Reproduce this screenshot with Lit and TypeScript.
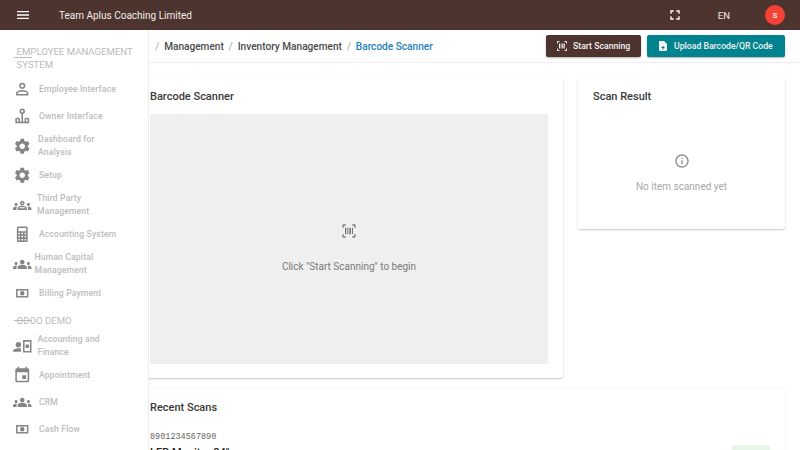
import { LitElement, html, css, svg } from "lit";
import { customElement } from "lit/decorators.js";

const settings = svg`<path d="M19.14 12.94c.04-.3.06-.61.06-.94 0-.32-.02-.64-.07-.94l2.03-1.58c.18-.14.23-.41.12-.61l-1.92-3.32c-.12-.22-.37-.29-.59-.22l-2.39.96c-.5-.38-1.03-.7-1.62-.94l-.36-2.54c-.04-.24-.24-.41-.48-.41h-3.84c-.24 0-.43.17-.47.41l-.36 2.54c-.59.24-1.13.57-1.62.94l-2.39-.96c-.22-.08-.47 0-.59.22L2.74 8.87c-.12.21-.08.47.12.61l2.03 1.58c-.05.3-.09.63-.09.94s.02.64.07.94l-2.03 1.58c-.18.14-.23.41-.12.61l1.92 3.32c.12.22.37.29.59.22l2.39-.96c.5.38 1.03.7 1.62.94l.36 2.54c.05.24.24.41.48.41h3.84c.24 0 .44-.17.47-.41l.36-2.54c.59-.24 1.13-.56 1.62-.94l2.39.96c.22.08.47 0 .59-.22l1.92-3.32c.12-.22.07-.47-.12-.61l-2.01-1.58zM12 15.6c-1.98 0-3.6-1.62-3.6-3.6s1.62-3.6 3.6-3.6 3.6 1.62 3.6 3.6-1.62 3.6-3.6 3.6z"/>`;
const person = svg`<path fill-rule="evenodd" d="M12 3.500a4 4 0 1 1 0 8 4 4 0 0 1 0-8zm0 2a2 2 0 1 0 0 4 2 2 0 0 0 0-4zM12 13c3 0 8 1.300 8 3.800V20H4v-3.200C4 14.300 9 13 12 13zm0 2c-2.800 0-6 1.100-6 1.800V18h12v-1.200c0-.7-3.200-1.800-6-1.800z"/>`;
const owner = svg`<g fill="none" stroke="currentColor" stroke-width="2"><circle cx="12" cy="5.500" r="2.500"/><path d="M12 8v13M4 21v-6.500M20 21v-6.500M3 20h18M5 15h3M16 15h3M8 15v5M16 15v5"/></g>`;
const groupsOut = svg`<path fill-rule="evenodd" d="M4 13c1.100 0 2-.9 2-2s-.9-2-2-2-2 .9-2 2 .9 2 2 2zm1.130 1.100c-.37-.06-.74-.1-1.130-.1-.99 0-1.930.21-2.780.58C.48 14.900 0 15.620 0 16.430V18h4.500v-1.610c0-.83.23-1.610.63-2.290zM20 13c1.100 0 2-.9 2-2s-.9-2-2-2-2 .9-2 2 .9 2 2 2zm4 3.430c0-.81-.48-1.530-1.220-1.850-.85-.37-1.790-.58-2.780-.58-.39 0-.76.04-1.130.1.4.68.63 1.460.63 2.290V18H24v-1.570zM12 12.750c1.630 0 3.070.39 4.240.9 1.080.48 1.760 1.560 1.760 2.730V18H6v-1.610c0-1.180.68-2.260 1.760-2.730 1.170-.52 2.610-.91 4.240-.91zM8 16h8v-.2c0-.4-.25-.75-.6-.9-1-.44-2.200-.15-3.400-.15s-2.400-.29-3.400.15c-.35.15-.6.5-.6.9zM12 6c1.660 0 3 1.340 3 3s-1.340 3-3 3-3-1.340-3-3 1.340-3 3-3zm0 2a1 1 0 1 0 0 2 1 1 0 0 0 0-2z"/>`;
const groups = svg`<path d="M12 12.750c1.630 0 3.070.39 4.240.9 1.080.48 1.760 1.560 1.760 2.730V18H6v-1.610c0-1.180.68-2.260 1.760-2.730 1.170-.52 2.610-.91 4.240-.91zM4 13c1.100 0 2-.9 2-2s-.9-2-2-2-2 .9-2 2 .9 2 2 2zm1.130 1.100c-.37-.06-.74-.1-1.130-.1-.99 0-1.930.21-2.780.58C.48 14.900 0 15.620 0 16.430V18h4.500v-1.610c0-.83.23-1.610.63-2.290zM20 13c1.100 0 2-.9 2-2s-.9-2-2-2-2 .9-2 2 .9 2 2 2zm4 3.430c0-.81-.48-1.530-1.220-1.850-.85-.37-1.790-.58-2.780-.58-.39 0-.76.04-1.130.1.4.68.63 1.460.63 2.290V18H24v-1.570zM12 6c1.660 0 3 1.340 3 3s-1.340 3-3 3-3-1.340-3-3 1.340-3 3-3z"/>`;
const calc = svg`<path fill-rule="evenodd" d="M7 2h10a2 2 0 0 1 2 2v16a2 2 0 0 1-2 2H7a2 2 0 0 1-2-2V4a2 2 0 0 1 2-2zm0 2v4h10V4zm0 6v2h2v-2zm4 0v2h2v-2zm4 0v2h2v-2zM7 14v2h2v-2zm4 0v2h2v-2zm4 0v2h2v-2zM7 18v2h2v-2zm4 0v2h2v-2zm4 0v2h2v-2z"/>`;
const money = svg`<path fill-rule="evenodd" d="M4 6.500h16v11H4zm2 2v7h12v-7zM12 9a3 3 0 1 1 0 6 3 3 0 0 1 0-6z"/>`;
const event = svg`<path d="M17 12h-5v5h5v-5zM16 1v2H8V1H6v2H5c-1.110 0-1.990.9-1.990 2L3 19c0 1.100.89 2 2 2h14c1.100 0 2-.9 2-2V5c0-1.100-.9-2-2-2h-1V1h-2zm3 18H5V8h14v11z"/>`;
const finance = svg`<path fill-rule="evenodd" d="M7 6.500a3.500 3.500 0 1 1 0 7 3.500 3.500 0 0 1 0-7zM0 18.500c0-2.600 4-4 7-4 1.100 0 2.300.2 3.400.5V19H0zM13 4h11v16H13zm2 2v12h7V6zm3.500 3.500a2.500 2.500 0 1 1 0 5 2.500 2.500 0 0 1 0-5z"/>`;
const scanner = svg`<path d="M2 7V4a2 2 0 0 1 2-2h3v2H4v3zM17 2h3a2 2 0 0 1 2 2v3h-2V4h-3zM2 17h2v3h3v2H4a2 2 0 0 1-2-2zM20 17h2v3a2 2 0 0 1-2 2h-3v-2h3zM6 7h2v10H6zM9.500 7h1.500v10H9.500zM12.500 7h2.500v10h-2.500zM16.500 7h1.500v10h-1.500z"/>`;

interface Item { label: string[]; icon: unknown; textX: number; }
const ICON = 18.5;
const PAD = 13;
const top: Item[] = [
  { label: ["Employee Interface"], icon: person, textX: 39 },
  { label: ["Owner Interface"], icon: owner, textX: 39 },
  { label: ["Dashboard for", "Analysis"], icon: settings, textX: 38 },
  { label: ["Setup"], icon: settings, textX: 39 },
  { label: ["Third Party", "Management"], icon: groupsOut, textX: 37 },
  { label: ["Accounting System"], icon: calc, textX: 39 },
  { label: ["Human Capital", "Management"], icon: groups, textX: 34.5 },
  { label: ["Billing Payment"], icon: money, textX: 39 },
];
const demo: Item[] = [
  { label: ["Accounting and", "Finance"], icon: finance, textX: 37.5 },
  { label: ["Appointment"], icon: event, textX: 39 },
  { label: ["CRM"], icon: groups, textX: 39 },
  { label: ["Cash Flow"], icon: money, textX: 39 },
];

@customElement("app-root")
export class AppRoot extends LitElement {
  static styles = css`
    :host { display: block; width: 800px; height: 450px; overflow: hidden; position: relative; background: #fff; font-family: Roboto, sans-serif; color: #333; }
    * { box-sizing: border-box; }
    svg { fill: currentColor; display: block; flex: none; }
    .topbar { height: 30px; background: #4e342e; color: #fff; display: flex; align-items: center; padding: 0 15px; font-size: 10px; }
    .menu { width: 16px; height: 16px; margin-right: 28px; }
    .brand { flex: 1; color: #f1ebe9; }
    .full { width: 16px; height: 16px; margin-right: 35px; }
    .lang { font-size: 9.500px; margin-right: 35px; color: #efe9e7; }
    .avatar { width: 20px; height: 20px; border-radius: 50%; background: #f44336; font-size: 8px; font-weight: 500; display: flex; align-items: center; justify-content: center; }
    .sidebar { position: absolute; left: 0; top: 30px; bottom: 0; width: 149px; background: #fff; border-right: 1px solid #ececec; padding-top: 15px; z-index: 2; color: #b4b4b4; }
    .section { position: relative; font-size: 9.600px; line-height: 13px; padding: 0 16.500px; color: #bbb; white-space: nowrap; }
    .section.main { margin-bottom: 5px; }
    .section.demo { margin: 6.500px 0 3.500px; }
    .section::before { content: ""; position: absolute; left: 14px; width: 18px; height: 1px; background: #b9b9b9; }
    .section.main::before { top: 12px; }
    .section.demo::before { top: 6px; }
    .item { min-height: 27px; padding: 3px 0 3px ${PAD}px; display: flex; align-items: center; font-size: 8.600px; font-weight: 500; line-height: 13px; letter-spacing: .15px; color: #bcbcbc; }
    .item svg { color: #858585; }
    main { margin-left: 135px; }
    .crumbs { height: 33px; border-bottom: 1px solid #eeeeee; display: flex; align-items: center; padding: 0 15px 0 20px; font-size: 10.100px; font-weight: 500; color: #4b4b4b; }
    .sep { color: #aaa; margin: 0 4.800px; font-weight: 400; font-size: 10.500px; }
    .sep.first { margin-left: 0; }
    .current { color: #1e7fb8; }
    .spacer { flex: 1; }
    .btn { height: 22px; border-radius: 2px; color: #f2f2f2; font-size: 8.700px; font-weight: 500; display: flex; align-items: center; box-shadow: 0 1px 2px rgba(0,0,0,.3); }
    .btn svg { width: 12px; height: 12px; margin-right: 5px; }
    .btn.dark { background: #4e342e; width: 95px; padding-left: 10px; margin-right: 6px; }
    .btn.teal { background: #00838f; width: 138px; padding-left: 10px; }
    .grid { display: grid; grid-template-columns: 428px 207px; gap: 15px; padding-top: 15px; height: 315px; align-items: start; }
    .card { background: #fff; border-radius: 3px; box-shadow: 0 1px 2px rgba(0,0,0,.22), 0 0 2px rgba(0,0,0,.04); padding: 0 15px; }
    h3 { margin: 0; font-size: 11px; font-weight: 500; line-height: 14px; color: #3a3a3a; padding-top: 11.500px; }
    .scan { height: 300px; }
    .stage { height: 250px; margin-top: 10.500px; background: #efefef; border-radius: 2px; display: flex; flex-direction: column; align-items: center; padding-top: 109px; color: #7b7b7b; font-size: 10px; }
    .stage svg { width: 16px; height: 16px; margin-bottom: 22px; color: #777; }
    .result { height: 151px; display: flex; flex-direction: column; }
    .empty { display: flex; flex-direction: column; align-items: center; padding-top: 49.500px; font-size: 10px; color: #a8a8a8; }
    .empty svg { width: 16px; height: 16px; margin-bottom: 12px; color: #8c8c8c; }
    .recent { width: 650px; height: 120px; margin-top: 11px; display: flex; justify-content: space-between; box-shadow: 0 0 2px rgba(0,0,0,.1); }
    .code { font-family: "Liberation Mono", monospace; font-size: 8.500px; color: #666; margin-top: 17.500px; line-height: 10px; }
    .name { font-size: 11px; font-weight: 500; color: #222; line-height: 14px; margin-top: 4px; }
    .chip { width: 38px; height: 20px; border-radius: 3px; background: #e8f5e9; margin-top: 56px; }
  `;

  private renderItem(i: Item) {
    const gap = `margin-right:${i.textX - PAD - ICON}px`;
    return html`<div class="item"><svg viewBox="0 0 24 24" width=${ICON} height=${ICON} style=${gap}>${i.icon}</svg><div>${i.label.map((l) => html`<div>${l}</div>`)}</div></div>`;
  }

  render() {
    return html`
      <div class="topbar">
        <svg class="menu" viewBox="0 0 24 24"><path d="M3 18h18v-2H3v2zm0-5h18v-2H3v2zm0-7v2h18V6H3z"/></svg>
        <span class="brand">Team Aplus Coaching Limited</span>
        <svg class="full" viewBox="0 0 24 24"><path d="M7 14H5v5h5v-2H7v-3zm-2-4h2V7h3V5H5v5zm12 7h-3v2h5v-5h-2v3zM14 5v2h3v3h2V5h-5z"/></svg>
        <span class="lang">EN</span>
        <span class="avatar">S</span>
      </div>
      <aside class="sidebar">
        <div class="section main">EMPLOYEE MANAGEMENT<br />SYSTEM</div>
        ${top.map((i) => this.renderItem(i))}
        <div class="section demo">ODOO DEMO</div>
        ${demo.map((i) => this.renderItem(i))}
      </aside>
      <main>
        <div class="crumbs">
          <span class="sep first">/</span><span>Management</span><span class="sep">/</span><span>Inventory Management</span><span class="sep">/</span><span class="current">Barcode Scanner</span>
          <span class="spacer"></span>
          <span class="btn dark"><svg viewBox="0 0 24 24">${scanner}</svg>Start Scanning</span>
          <span class="btn teal"><svg viewBox="0 0 24 24"><path d="M14 2H6c-1.100 0-2 .9-2 2v16c0 1.100.9 2 2 2h12c1.100 0 2-.9 2-2V8l-6-6zm-1 14v3h-2v-3H8l4-4 4 4h-3z"/></svg>Upload Barcode/QR Code</span>
        </div>
        <div class="grid">
          <section class="card scan">
            <h3>Barcode Scanner</h3>
            <div class="stage"><svg viewBox="0 0 24 24">${scanner}</svg><span>Click "Start Scanning" to begin</span></div>
          </section>
          <section class="card result">
            <h3>Scan Result</h3>
            <div class="empty"><svg viewBox="0 0 24 24"><path d="M11 7h2v2h-2zm0 4h2v6h-2zm1-9C6.480 2 2 6.480 2 12s4.480 10 10 10 10-4.480 10-10S17.520 2 12 2zm0 18c-4.410 0-8-3.590-8-8s3.590-8 8-8 8 3.590 8 8-3.590 8-8 8z"/></svg><span>No item scanned yet</span></div>
          </section>
        </div>
        <section class="card recent">
          <div>
            <h3>Recent Scans</h3>
            <div class="code">8901234567890</div>
            <div class="name">LED Monitor 24"</div>
          </div>
          <div class="chip"></div>
        </section>
      </main>
    `;
  }
}
